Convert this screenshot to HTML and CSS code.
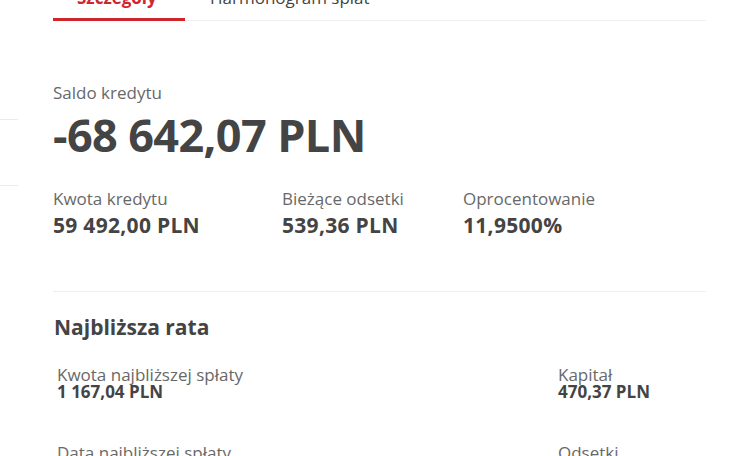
FILE: index.html
```html
<!DOCTYPE html>
<html lang="pl">
<head>
  <meta charset="UTF-8" />
  <title>Szczegóły kredytu</title>
  <link rel="stylesheet" href="styles.css">
</head>
<body>
  <div class="page">
    <aside class="side">
      <div class="side-line first"></div>
      <div class="side-line"></div>
    </aside>

    <main class="content">
      <nav class="tabs">
        <a class="tab active" href="#">Szczegóły</a>
        <a class="tab" href="#">Harmonogram spłat</a>
      </nav>

      <section class="balance">
        <div class="label">Saldo kredytu</div>
        <div class="big">-68 642,07 PLN</div>

        <div class="stats">
          <div class="stat">
            <div class="label">Kwota kredytu</div>
            <div class="value">59 492,00 PLN</div>
          </div>
          <div class="stat">
            <div class="label">Bieżące odsetki</div>
            <div class="value">539,36 PLN</div>
          </div>
          <div class="stat">
            <div class="label">Oprocentowanie</div>
            <div class="value">11,9500%</div>
          </div>
        </div>
      </section>

      <section class="next">
        <h2>Najbliższa rata</h2>
        <div class="next-grid">
          <div class="item">
            <div class="label">Kwota najbliższej spłaty</div>
            <div class="value">1 167,04 PLN</div>
          </div>
          <div class="item">
            <div class="label">Kapitał</div>
            <div class="value">470,37 PLN</div>
          </div>
          <div class="item">
            <div class="label">Data najbliższej spłaty</div>
            <div class="value">15.07.2024</div>
          </div>
          <div class="item">
            <div class="label">Odsetki</div>
            <div class="value">696,67 PLN</div>
          </div>
        </div>
      </section>
    </main>
  </div>
</body>
</html>
```

FILE: styles.css
```css
* {
  box-sizing: border-box;
  font-family: "Open Sans", Arial, sans-serif;
}
body {
  margin: 0;
  background: #fff;
  color: #444;
  overflow: hidden;
}
.page {
  display: flex;
  height: 456px;
}
.side {
  width: 18px;
  flex-shrink: 0;
  padding-top: 119px;
}
.side-line {
  height: 1px;
  background: #e4eef0;
}
.side-line.first {
  margin-bottom: 65px;
}
.content {
  flex: 1;
  padding: 0 24px 0 35px;
}

/* tabs */
.tabs {
  display: flex;
  margin-top: -12px;
  border-bottom: 1px solid #eef0f0;
}
.tab {
  display: block;
  font-size: 17px;
  line-height: 20px;
  padding: 0 0 10px;
  color: #444;
  text-decoration: none;
}
.tab.active {
  width: 132px;
  padding-left: 24px;
  color: #d0262b;
  font-weight: 700;
  border-bottom: 3px solid #d0262b;
  margin-bottom: -1px;
}
.tab + .tab {
  margin-left: 25px;
}

/* balance */
.label {
  font-size: 17px;
  line-height: 20px;
  color: #686868;
}
.balance {
  padding-top: 62px;
  padding-bottom: 53px;
  border-bottom: 1px solid #eef0f0;
}
.big {
  font-size: 45px;
  line-height: 50px;
  font-weight: 700;
  color: #444;
  margin-top: 7px;
  letter-spacing: -0.6px;
}
.stats {
  display: grid;
  grid-template-columns: 229px 181px auto;
  margin-top: 29px;
}
.stat .value {
  font-size: 21px;
  line-height: 26px;
  font-weight: 700;
  color: #444;
  margin-top: 3px;
  letter-spacing: 0.3px;
}

/* next installment */
.next {
  padding: 0 4px;
}
.next h2 {
  font-size: 21px;
  line-height: 28px;
  font-weight: 700;
  color: #444;
  margin: 21px 0 0 -3px;
}
.next-grid {
  display: grid;
  grid-template-columns: 501px auto;
  row-gap: 43px;
  margin-top: 24px;
}
.item .label {
  line-height: 19px;
}
.item .value {
  font-size: 17px;
  line-height: 16px;
  font-weight: 700;
  color: #444;
}
```
